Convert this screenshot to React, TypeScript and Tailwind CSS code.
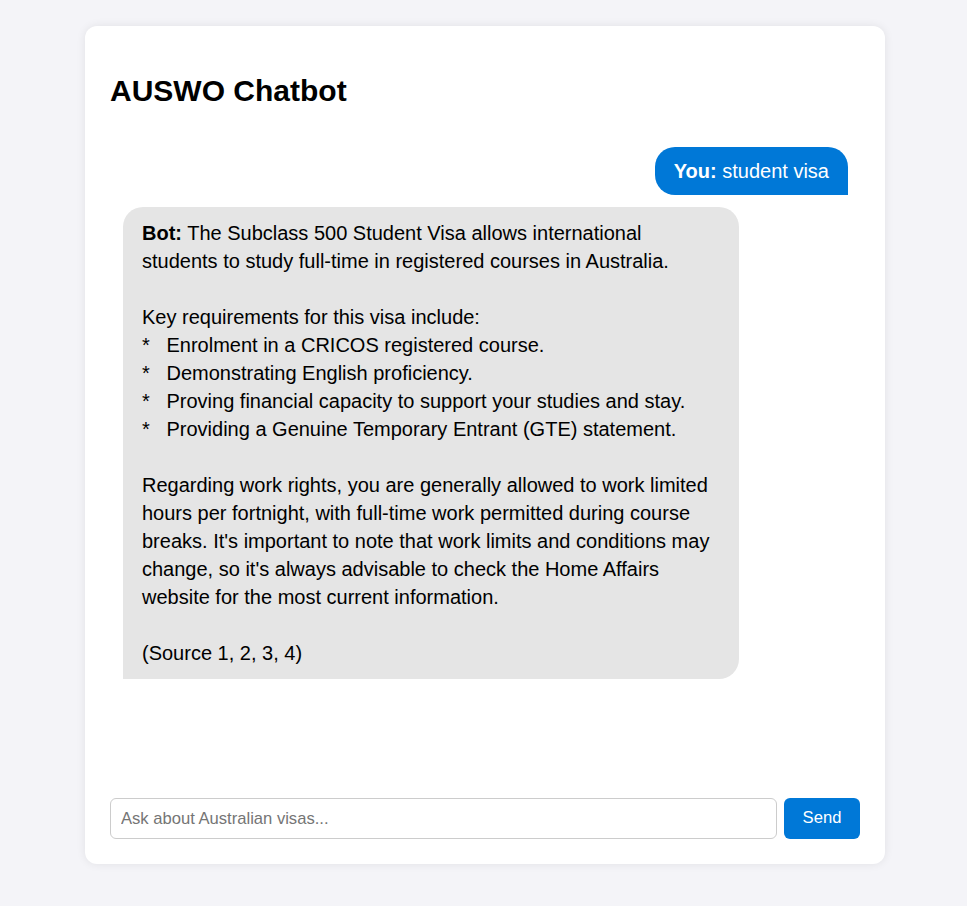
const botReply = `The Subclass 500 Student Visa allows international students to study full-time in registered courses in Australia.

Key requirements for this visa include:
*   Enrolment in a CRICOS registered course.
*   Demonstrating English proficiency.
*   Proving financial capacity to support your studies and stay.
*   Providing a Genuine Temporary Entrant (GTE) statement.

Regarding work rights, you are generally allowed to work limited hours per fortnight, with full-time work permitted during course breaks. It's important to note that work limits and conditions may change, so it's always advisable to check the Home Affairs website for the most current information.

(Source 1, 2, 3, 4)`

export default function App() {
  return (
    <div className="min-h-screen bg-[#f4f4f8] py-[26px] font-['Liberation_Sans',Arial,sans-serif] text-black">
      <div className="ml-[85px] flex h-[838px] w-[800px] flex-col rounded-xl bg-white p-[25px] shadow-[0_0_10px_rgba(0,0,0,0.08)]">
        <h1 className="mt-[22px] mb-[26px] text-[30px] leading-9 font-bold">AUSWO Chatbot</h1>

        <div className="flex flex-1 flex-col gap-3 overflow-auto pt-3 pr-3 pl-[13px]">
          <div className="self-end rounded-[20px] rounded-br-none bg-[#0078d7] px-[19px] py-[10px] text-[20px] leading-7 text-white">
            <b>You:</b> student visa
          </div>
          <div className="max-w-[85%] self-start rounded-[20px] rounded-bl-none bg-[#e5e5e5] px-[19px] py-3 text-[20px] leading-7 whitespace-pre-wrap">
            <b>Bot:</b> {botReply}
          </div>
        </div>

        <div className="flex gap-[7px]">
          <input
            type="text"
            placeholder="Ask about Australian visas..."
            className="h-[41px] flex-1 rounded-md border border-[#ccc] px-[10px] text-[16.6px] placeholder:text-[#757575] outline-none"
          />
          <button className="h-[41px] w-[76px] rounded-md bg-[#0078d7] text-[16.6px] text-white">Send</button>
        </div>
      </div>
    </div>
  )
}
